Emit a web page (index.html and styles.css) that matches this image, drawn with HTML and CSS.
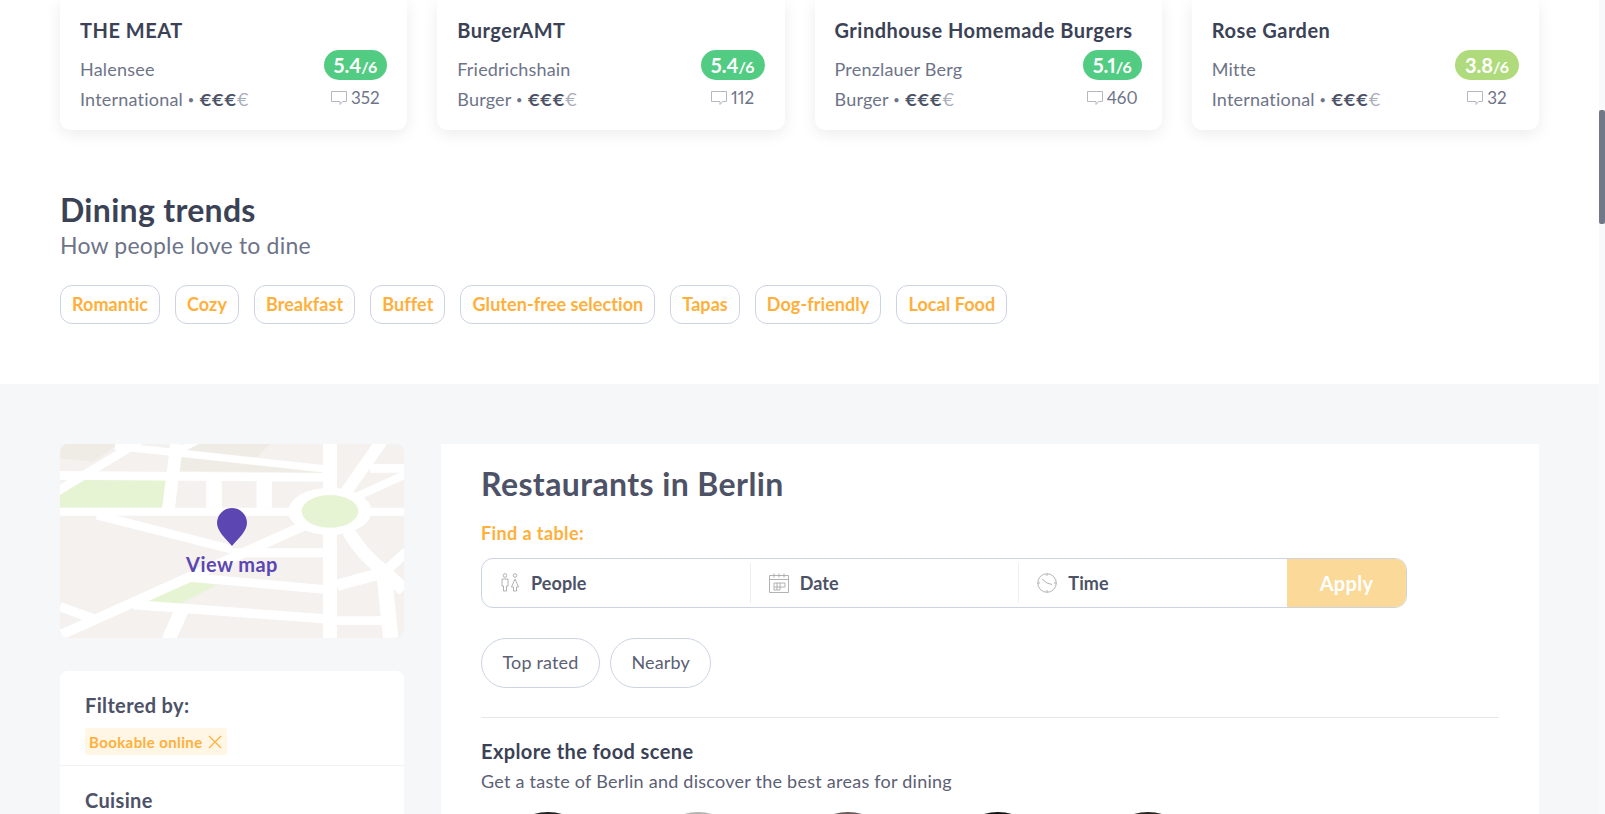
FILE: index.html
```html
<!DOCTYPE html>
<html lang="en">
<head>
    <meta charset="UTF-8">
    <meta name="viewport" content="width=device-width, initial-scale=1.0">
    <title>Restaurants in Berlin</title>
    <link rel="stylesheet" href="styles.css">
</head>
<body>
    <div class="page">
        <!-- Top rated cards and trends -->
        <section class="top">
            <div class="cards">
                <div class="card">
                    <h3>THE MEAT</h3>
                    <div class="card-body">
                        <div class="card-info">
                            <div>Halensee</div>
                            <div>International <span class="dot">•</span> <b>€€€</b><span class="euro-off">€</span></div>
                        </div>
                        <div class="card-score">
                            <span class="badge">5.4<small>/6</small></span>
                            <span class="count"><svg class="bubble" viewBox="0 0 16 14"><path d="M.5.5h15v10h-4l-2.5 3v-3H.5z"/></svg>352</span>
                        </div>
                    </div>
                </div>
                <div class="card">
                    <h3>BurgerAMT</h3>
                    <div class="card-body">
                        <div class="card-info">
                            <div>Friedrichshain</div>
                            <div>Burger <span class="dot">•</span> <b>€€€</b><span class="euro-off">€</span></div>
                        </div>
                        <div class="card-score">
                            <span class="badge">5.4<small>/6</small></span>
                            <span class="count"><svg class="bubble" viewBox="0 0 16 14"><path d="M.5.5h15v10h-4l-2.5 3v-3H.5z"/></svg>112</span>
                        </div>
                    </div>
                </div>
                <div class="card">
                    <h3>Grindhouse Homemade Burgers</h3>
                    <div class="card-body">
                        <div class="card-info">
                            <div>Prenzlauer Berg</div>
                            <div>Burger <span class="dot">•</span> <b>€€€</b><span class="euro-off">€</span></div>
                        </div>
                        <div class="card-score">
                            <span class="badge">5.1<small>/6</small></span>
                            <span class="count"><svg class="bubble" viewBox="0 0 16 14"><path d="M.5.5h15v10h-4l-2.5 3v-3H.5z"/></svg>460</span>
                        </div>
                    </div>
                </div>
                <div class="card">
                    <h3>Rose Garden</h3>
                    <div class="card-body">
                        <div class="card-info">
                            <div>Mitte</div>
                            <div>International <span class="dot">•</span> <b>€€€</b><span class="euro-off">€</span></div>
                        </div>
                        <div class="card-score">
                            <span class="badge badge-light">3.8<small>/6</small></span>
                            <span class="count"><svg class="bubble" viewBox="0 0 16 14"><path d="M.5.5h15v10h-4l-2.5 3v-3H.5z"/></svg>32</span>
                        </div>
                    </div>
                </div>
            </div>

            <h2 class="trends-title">Dining trends</h2>
            <p class="trends-sub">How people love to dine</p>
            <div class="tags">
                <a class="tag">Romantic</a>
                <a class="tag">Cozy</a>
                <a class="tag">Breakfast</a>
                <a class="tag">Buffet</a>
                <a class="tag">Gluten-free selection</a>
                <a class="tag">Tapas</a>
                <a class="tag">Dog-friendly</a>
                <a class="tag">Local Food</a>
            </div>
        </section>

        <!-- Listing -->
        <section class="listing">
            <aside class="side">
                <div class="map">
                    <svg class="map-art" viewBox="60 42 1032 582" preserveAspectRatio="none">
                        <rect x="60" y="42" width="1032" height="582" fill="#f4f1ee"/>
                        <g fill="#efece5">
                            <polygon points="60,42 60,85 160,95 235,42"/>
                            <polygon points="440,60 470,42 690,42 650,82"/>
                            <polygon points="425,82 850,128 420,122"/>
                        </g>
                        <g fill="#e6f4d4">
                            <polygon points="60,195 130,150 378,150 367,233 60,233"/>
                            <polygon points="318,514 445,452 530,465 420,522"/>
                        </g>
                        <g fill="none" stroke="#fff" stroke-width="26">
                            <line x1="60" y1="136" x2="850" y2="142"/>
                            <line x1="225" y1="48" x2="850" y2="116" stroke-width="22"/>
                            <line x1="50" y1="185" x2="300" y2="34"/>
                            <line x1="410" y1="42" x2="385" y2="240" stroke-width="38"/>
                            <line x1="420" y1="60" x2="470" y2="34" stroke-width="20"/>
                            <line x1="522" y1="150" x2="522" y2="233" stroke-width="47"/>
                            <line x1="673" y1="150" x2="673" y2="233" stroke-width="47"/>
                            <line x1="60" y1="245" x2="1092" y2="245" stroke-width="24"/>
                            <line x1="870" y1="42" x2="870" y2="624" stroke-width="42"/>
                            <line x1="170" y1="255" x2="575" y2="358"/>
                            <line x1="575" y1="368" x2="850" y2="368" stroke-width="27"/>
                            <line x1="50" y1="620" x2="790" y2="288" stroke-width="30"/>
                            <line x1="280" y1="524" x2="850" y2="566" stroke-width="28"/>
                            <line x1="450" y1="442" x2="850" y2="478"/>
                            <line x1="60" y1="530" x2="170" y2="570" stroke-width="28"/>
                            <line x1="430" y1="530" x2="385" y2="630" stroke-width="42"/>
                            <line x1="891" y1="466" x2="1030" y2="428" stroke-width="34"/>
                            <line x1="891" y1="572" x2="1030" y2="572"/>
                            <line x1="1032" y1="430" x2="1052" y2="624" stroke-width="46"/>
                            <path d="M925 305Q970 380 1040 430L1092 480" stroke-width="40"/>
                            <line x1="1035" y1="425" x2="1100" y2="365" stroke-width="30"/>
                            <line x1="915" y1="190" x2="1025" y2="34" stroke-width="36"/>
                            <line x1="950" y1="200" x2="1100" y2="132" stroke-width="24"/>
                            <line x1="990" y1="115" x2="1092" y2="115"/>
                        </g>
                        <ellipse cx="870" cy="244" rx="125" ry="71" fill="#fff"/>
                        <ellipse cx="870" cy="244" rx="85" ry="49" fill="#e6f4d4"/>
                    </svg>
                    <div class="map-link">
                        <svg class="pin" viewBox="0 0 30 38"><path d="M15 38C9 31 0 23 0 15a15 15 0 0 1 30 0c0 8-9 16-15 23z"/></svg>
                        <span>View map</span>
                    </div>
                </div>

                <div class="filters">
                    <div class="filter-block">
                        <h4>Filtered by:</h4>
                        <span class="chip">Bookable online
                            <svg class="chip-x" viewBox="0 0 14 14"><path d="M1 1l12 12M13 1L1 13"/></svg>
                        </span>
                    </div>
                    <div class="filter-block">
                        <h4>Cuisine</h4>
                    </div>
                </div>
            </aside>

            <main class="main">
                <h1>Restaurants in Berlin</h1>
                <div class="find-label">Find a table:</div>
                <div class="search">
                    <div class="search-part">
                        <svg class="search-icon" viewBox="0 0 20 20"><circle cx="5" cy="2.5" r="1.8"/><circle cx="15" cy="2.5" r="1.8"/><path d="M2 6h6v7H6.500v5h-3v-5H2zM15 6l3.500 8H16.500v4h-3v-4H11.500z"/></svg>
                        People
                    </div>
                    <div class="search-part">
                        <svg class="search-icon" viewBox="0 0 20 20"><path d="M.5 2.500h19v17H.5zM.5 6.500h19M5 .5v4M10 .5v4M15 .5v4M5 10h6v7H5zM11 10h5v4H5M8 10v7"/></svg>
                        Date
                    </div>
                    <div class="search-part">
                        <svg class="search-icon" viewBox="0 0 20 20"><circle cx="10" cy="10" r="9.300"/><path d="M10 10L5 6M10 10l5 1.500M10 1v2M10 17v2M1 10h2M17 10h2"/></svg>
                        Time
                    </div>
                    <button class="apply" type="button">Apply</button>
                </div>
                <div class="pills">
                    <a class="pill">Top rated</a>
                    <a class="pill">Nearby</a>
                </div>
                <hr class="rule">
                <h3 class="explore-title">Explore the food scene</h3>
                <p class="explore-sub">Get a taste of Berlin and discover the best areas for dining</p>
                <div class="areas">
                    <div class="area area-1"></div>
                    <div class="area area-2"></div>
                    <div class="area area-3"></div>
                    <div class="area area-4"></div>
                    <div class="area area-5"></div>
                </div>
            </main>
        </section>
    </div>

    <div class="scrollbar"><div class="scrollbar-thumb"></div></div>
</body>
</html>
```

FILE: styles.css
```css
/* General */
html, body {
    height: 814px;
    overflow: hidden;
}

body {
    display: flex;
    margin: 0;
    font-family: Lato, "Open Sans", sans-serif;
    font-variant-numeric: proportional-nums;
    background-color: #fff;
    color: #3b4256;
}

.page {
    flex: 1;
    min-width: 0;
}

h1, h2, h3, h4, p {
    margin: 0;
}

.scrollbar {
    width: 6px;
    background-color: #f8f9fa;
}

.scrollbar-thumb {
    height: 114px;
    margin-top: 110px;
    border-radius: 2px;
    background-color: #727888;
}

/* Top section */
.top {
    height: 384px;
    box-sizing: border-box;
    padding: 0 60px;
}

.cards {
    display: grid;
    grid-template-columns: repeat(4, 1fr);
    gap: 30px;
}

.card {
    height: 130px;
    box-sizing: border-box;
    padding: 18px 20px 0;
    border-radius: 0 0 10px 10px;
    background-color: #fff;
    box-shadow: 0 4px 16px rgba(0, 0, 0, 0.08);
}

.card h3 {
    font-size: 20px;
    line-height: 24px;
    font-weight: 700;
    letter-spacing: 0.5px;
}

.card-body {
    display: flex;
    justify-content: space-between;
    margin-top: 8px;
}

.card-info {
    padding-top: 4px;
    font-size: 18px;
    line-height: 30px;
    letter-spacing: 0.2px;
    color: #6e7488;
}

.dot {
    font-size: 11px;
    vertical-align: 2px;
}

.card-info b {
    color: #4d5266;
    font-size: 17px;
    letter-spacing: 0;
}

.euro-off {
    color: #a9adb9;
    font-size: 17px;
    letter-spacing: 0;
}

.card-score {
    display: flex;
    flex-direction: column;
    align-items: center;
}

.badge {
    height: 30px;
    padding: 0 10px;
    border-radius: 15px;
    background-color: #52cc82;
    color: #fff;
    font-size: 20px;
    line-height: 30px;
    font-weight: 700;
}

.badge small {
    font-size: 16px;
}

.badge-light {
    background-color: #b0db7d;
}

.count {
    display: flex;
    align-items: center;
    gap: 4px;
    margin-top: 6px;
    font-size: 17px;
    line-height: 24px;
    color: #6e7488;
}

.bubble {
    width: 16px;
    height: 14px;
    fill: none;
    stroke: #b5b8c2;
}

.trends-title {
    margin-top: 62px;
    font-size: 32px;
    line-height: 36px;
    font-weight: 700;
    letter-spacing: 0.3px;
}

.trends-sub {
    margin-top: 2px;
    font-size: 23px;
    line-height: 30px;
    letter-spacing: 0.2px;
    color: #6e7488;
}

.tags {
    display: flex;
    gap: 15px;
    margin-top: 25px;
}

.tag {
    height: 39px;
    box-sizing: border-box;
    padding: 0 11px;
    border: 1px solid #ccd4e2;
    border-radius: 12px;
    color: #ffb03b;
    font-size: 18px;
    line-height: 37px;
    font-weight: 700;
    letter-spacing: 0.07px;
}

/* Listing */
.listing {
    display: flex;
    gap: 37px;
    height: 430px;
    box-sizing: border-box;
    padding: 60px 60px 0;
    background-color: #f6f7f9;
}

.side {
    flex: none;
    width: 344px;
}

.map {
    position: relative;
    height: 194px;
    margin-bottom: 33px;
    border-radius: 8px;
    overflow: hidden;
}

.map-art {
    display: block;
    width: 100%;
    height: 100%;
}

.map-link {
    position: absolute;
    top: 64px;
    left: 0;
    right: 0;
    display: flex;
    flex-direction: column;
    align-items: center;
    gap: 6px;
    color: #5c46b2;
    font-size: 20px;
    line-height: 24px;
    font-weight: 700;
    letter-spacing: 0.45px;
}

.pin {
    width: 30px;
    height: 38px;
    fill: #5c46b2;
}

.filters {
    height: 300px;
    border-radius: 8px;
    background-color: #fff;
}

.filter-block {
    padding: 22px 25px 9px;
    border-bottom: 1px solid #f1f2f5;
}

.filter-block h4 {
    font-size: 20px;
    line-height: 24px;
    font-weight: 700;
    letter-spacing: 0.35px;
    color: #4d5266;
}

.chip {
    display: inline-flex;
    align-items: center;
    gap: 5px;
    height: 27px;
    margin-top: 11px;
    margin-bottom: 1px;
    padding: 0 5px 0 4px;
    border-radius: 3px;
    background-color: #fff6e6;
    color: #ffb03b;
    font-size: 15px;
    font-weight: 700;
    letter-spacing: 0.4px;
}

.chip-x {
    width: 14px;
    height: 14px;
    fill: none;
    stroke: #ffb03b;
    stroke-width: 1.3;
}

.main {
    flex: 1;
    min-width: 0;
    padding: 20px 40px 0;
    background-color: #fff;
}

.main h1 {
    font-size: 32px;
    line-height: 40px;
    font-weight: 700;
    letter-spacing: 0.4px;
    color: #4d5266;
}

.find-label {
    margin-top: 18px;
    color: #ffb03b;
    font-size: 18px;
    line-height: 22px;
    font-weight: 700;
    letter-spacing: 0.4px;
}

.search {
    display: flex;
    width: 926px;
    height: 50px;
    box-sizing: border-box;
    margin-top: 14px;
    border: 1px solid #ccd4e2;
    border-radius: 12px;
    overflow: hidden;
}

.search-part {
    flex: 1;
    display: flex;
    align-items: center;
    gap: 11px;
    margin: 4px 0;
    padding-left: 18px;
    border-right: 1px solid #eceef2;
    font-size: 18px;
    font-weight: 700;
    letter-spacing: 0.1px;
    color: #4d5266;
}

.search-part:nth-child(3) {
    border-right: none;
}

.search-icon {
    width: 20px;
    height: 20px;
    fill: none;
    stroke: #a9a9a9;
    stroke-width: 0.9;
}

.apply {
    flex: none;
    width: 119px;
    border: none;
    background-color: #fbd998;
    color: #fff;
    font-family: inherit;
    font-size: 20px;
    font-weight: 700;
    letter-spacing: 0.3px;
}

.pills {
    display: flex;
    gap: 10px;
    margin-top: 30px;
}

.pill {
    height: 50px;
    box-sizing: border-box;
    padding: 0 20.5px;
    border: 1px solid #ccd4e2;
    border-radius: 25px;
    font-size: 18px;
    line-height: 46px;
    letter-spacing: 0.15px;
    color: #5b6075;
}

.rule {
    height: 1px;
    margin: 29px 0 0;
    border: none;
    background-color: #e5e7eb;
}

.explore-title {
    margin-top: 21px;
    font-size: 20px;
    line-height: 24px;
    font-weight: 700;
    letter-spacing: 0.4px;
}

.explore-sub {
    margin-top: 6px;
    font-size: 18px;
    line-height: 24px;
    letter-spacing: 0.25px;
    color: #5b6075;
}

.areas {
    display: flex;
    gap: 50px;
    margin-top: 19px;
    padding-left: 17px;
}

.area {
    flex: none;
    width: 100px;
    height: 100px;
    border-radius: 50%;
}

.area-1 {
    background-color: #1f1f1f;
}

.area-2 {
    background-color: #b5b3b0;
}

.area-3 {
    background-color: #6b5a5a;
}

.area-4 {
    background-color: #141414;
}

.area-5 {
    background-color: #2a2520;
}
```
